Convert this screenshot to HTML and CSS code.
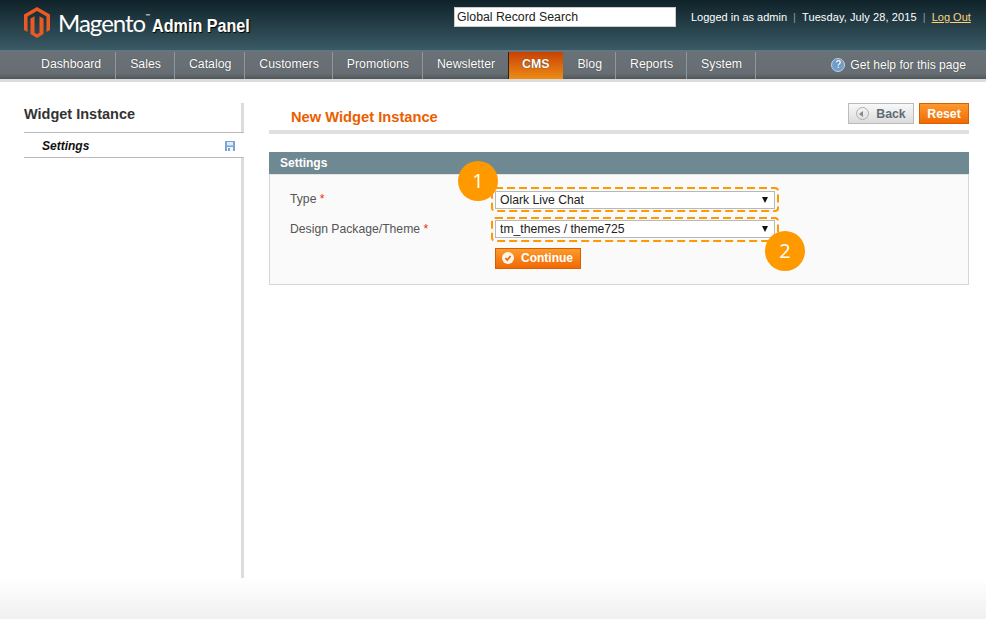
FILE: index.html
```html
<!DOCTYPE html>
<html lang="en">
<head>
    <meta charset="UTF-8">
    <title>New Widget Instance / Magento Admin</title>
    <link rel="stylesheet" href="styles.css">
</head>
<body>
    <header class="header">
        <div class="logo">
            <svg class="logo-mark" viewBox="0 0 26 31" width="26" height="31">
                <path fill="#ec5a23" d="M13 0L26 7.5V23L22.5 25V9.5L13 4L3.5 9.5V25L0 23V7.5Z"/>
                <path fill="#ec5a23" d="M6.5 11.5L10.5 9.2V25.7L13 27.2L15.5 25.7V9.2L19.5 11.5V27L13 31L6.5 27Z"/>
            </svg>
            <span class="logo-word">Magento<sup>™</sup></span>
            <span class="logo-panel">Admin Panel</span>
        </div>
        <input class="search" type="text" value="Global Record Search">
        <div class="user-info">
            <span>Logged in as admin</span>
            <i>|</i>
            <span class="date">Tuesday, July 28, 2015</span>
            <i>|</i>
            <a href="#">Log Out</a>
        </div>
    </header>

    <nav class="nav">
        <ul class="nav-list">
            <li>Dashboard</li>
            <li>Sales</li>
            <li>Catalog</li>
            <li>Customers</li>
            <li>Promotions</li>
            <li>Newsletter</li>
            <li class="active">CMS</li>
            <li>Blog</li>
            <li>Reports</li>
            <li>System</li>
        </ul>
        <a class="help" href="#"><span class="help-icon">?</span>Get help for this page</a>
    </nav>

    <div class="content">
        <aside class="sidebar">
            <h3>Widget Instance</h3>
            <div class="tab">
                <em>Settings</em>
                <svg viewBox="0 0 10 10" width="10" height="10">
                    <rect width="10" height="10" fill="#7ba4d6"/>
                    <rect x="2" y="1" width="6" height="3.5" fill="#dfeaf6"/>
                    <rect x="2" y="6" width="6" height="4" fill="#f4f6f8"/>
                    <rect x="3" y="7" width="2" height="3" fill="#7ba4d6"/>
                </svg>
            </div>
        </aside>

        <main class="main">
            <div class="page-head">
                <h3>New Widget Instance</h3>
                <button class="btn-back"><span class="back-icon"></span>Back</button>
                <button class="btn-reset">Reset</button>
            </div>

            <section class="panel">
                <h4>Settings</h4>
                <div class="panel-body">
                    <div class="row">
                        <label>Type <b>*</b></label>
                        <div class="dashed">
                            <svg class="dash-line" width="288" height="25"><rect x="1" y="1" width="286" height="23" rx="3"/></svg>
                            <div class="select-wrap">
                                <select><option>Olark Live Chat</option></select>
                            </div>
                        </div>
                    </div>
                    <div class="row">
                        <label>Design Package/Theme <b>*</b></label>
                        <div class="dashed second">
                            <svg class="dash-line" width="288" height="25"><rect x="1" y="1" width="286" height="23" rx="3"/></svg>
                            <div class="select-wrap">
                                <select><option>tm_themes / theme725</option></select>
                            </div>
                        </div>
                    </div>
                    <button class="btn-continue"><span class="check">
                        <svg viewBox="0 0 12 12" width="12" height="12"><circle cx="6" cy="6" r="6" fill="#fdf3e6"/><path d="M3.4 6.2L5.3 8L8.6 4" fill="none" stroke="#e8650f" stroke-width="1.7"/></svg>
                    </span>Continue</button>
                    <span class="badge badge-one">1</span>
                    <span class="badge badge-two">2</span>
                </div>
            </section>
        </main>
    </div>

    <footer class="footer"></footer>
</body>
</html>
```

FILE: styles.css
```css
* {
    box-sizing: border-box;
}

html, body {
    height: 619px;
    overflow: hidden;
}

body {
    font-family: "Liberation Sans", Arial, sans-serif;
    font-size: 12.3px;
    background-color: #fff;
    color: #444;
    margin: 0;
}

.header {
    height: 50px;
    background: linear-gradient(to bottom, #0f2229, #3a5a65);
    display: flex;
    padding-left: 24px;
}

.logo {
    display: flex;
    align-items: flex-start;
    width: 430px;
    padding-top: 7px;
    color: #fff;
}

.logo-mark {
    flex: none;
}

.logo-word {
    font-family: Lato, sans-serif;
    font-size: 24px;
    letter-spacing: -1px;
    line-height: 32px;
    margin-left: 8px;
    width: 94px;
    flex: none;
    white-space: nowrap;
}

.logo-word sup {
    font-size: 6px;
    line-height: 0;
    letter-spacing: 0;
    vertical-align: 14px;
}

.logo-panel {
    font-weight: bold;
    font-size: 19px;
    line-height: 20px;
    margin-top: 9px;
    white-space: nowrap;
    transform: scaleX(0.85);
    transform-origin: left center;
    text-shadow: 1px 1px 1px #000;
}

.search {
    width: 222px;
    height: 20px;
    margin-top: 7px;
    padding: 0 2px;
    border: 1px solid #ccc;
    background: #fff;
    font: 12.3px "Liberation Sans", Arial, sans-serif;
    color: #222;
}

.user-info {
    margin-left: 15px;
    padding-top: 11px;
    font-size: 11px;
    line-height: 13px;
    color: #fff;
    white-space: nowrap;
}

.user-info i {
    font-style: normal;
    color: #8a9a9f;
    margin: 0 3px;
}

.user-info .date {
    letter-spacing: 0.1px;
}

.user-info a {
    color: #ffd27a;
}

.nav {
    height: 32px;
    border-top: 2px solid #62777e;
    border-bottom: 3px solid #dcdcdc;
    background: linear-gradient(to bottom, #6a7277 0, #666e73 80%, #4f565a 100%);
    display: flex;
    justify-content: space-between;
}

.nav-list {
    list-style: none;
    margin: 0;
    padding: 0 0 0 27px;
    display: flex;
}

.nav-list li {
    padding: 0 13px 0 14px;
    border-right: 1px solid #8f979b;
    line-height: 25px;
    color: #fff;
    text-shadow: 0 0 1px #333;
}

.nav-list li:first-child {
    padding-right: 14px;
}

.nav-list li.active {
    padding: 0 14px 0 13px;
    border-right: 0;
    border-left: 1px solid #222;
    margin-left: -1px;
    background: linear-gradient(to bottom, #c84204, #ec8c16);
    font-weight: bold;
}

.help {
    color: #fff;
    font-size: 12.1px;
    text-decoration: none;
    padding: 0 20px 2px 0;
    display: flex;
    align-items: center;
    text-shadow: 0 0 1px #333;
}

.help-icon {
    width: 14px;
    height: 14px;
    margin-right: 5px;
    border-radius: 50%;
    background: #6f9fd0;
    border: 1px solid #bcd3ea;
    font-size: 10px;
    font-weight: bold;
    line-height: 12px;
    text-align: center;
}

.content {
    height: 496px;
    display: flex;
    align-items: flex-start;
    padding: 21px 17px 0 24px;
}

.sidebar {
    width: 220px;
    height: 475px;
    border-right: 3px solid #dcdcdc;
}

.sidebar h3 {
    margin: 0 -3px 0 0;
    height: 30px;
    border-bottom: 1px solid #bbb;
    font-size: 14.5px;
    line-height: 22px;
    color: #333;
}

.tab {
    height: 25px;
    border-bottom: 1px solid #bbb;
    display: flex;
    align-items: center;
    justify-content: space-between;
    padding: 1px 9px 0 18px;
    margin-right: -3px;
    background: #fff;
    color: #111;
}

.tab em {
    font-weight: bold;
    font-size: 12px;
}

.main {
    width: 700px;
    margin-left: 25px;
}

.page-head {
    height: 31px;
    border-bottom: 4px solid #e0e0e0;
    display: flex;
    align-items: flex-start;
}

.page-head h3 {
    margin: 6px auto 0 22px;
    font-size: 14.7px;
    line-height: 16px;
    color: #eb5e00;
}

button {
    font-family: "Liberation Sans", Arial, sans-serif;
    font-weight: bold;
    font-size: 12.3px;
    cursor: pointer;
    padding: 0;
}

.btn-back {
    width: 66px;
    height: 21px;
    margin-right: 5px;
    border: 1px solid #bbb;
    background: linear-gradient(to bottom, #f8f8f8, #dcdcdc);
    color: #5b6b78;
    display: flex;
    align-items: center;
    justify-content: center;
}

.back-icon {
    width: 13px;
    height: 13px;
    margin-right: 7px;
    border-radius: 50%;
    border: 1px solid #b0b0b0;
    position: relative;
}

.back-icon::after {
    content: "";
    position: absolute;
    left: 2px;
    top: 2.5px;
    border: 3px solid transparent;
    border-right: 4px solid #888;
    border-left: 0;
}

.btn-reset {
    width: 50px;
    height: 21px;
    border: 1px solid #d85f00;
    background: linear-gradient(to bottom, #fb9a2e, #f06a05);
    color: #fff;
}

.panel {
    margin-top: 18px;
}

.panel h4 {
    margin: 0;
    height: 22px;
    padding-left: 11px;
    background-color: #6f8992;
    color: #fff;
    font-size: 12px;
    line-height: 22px;
}

.panel-body {
    position: relative;
    height: 111px;
    padding: 12px 0 0 20px;
    border: 1px solid #d6d6d6;
    border-top-color: #e4e4e4;
    background-color: #fafafa;
}

.row {
    display: flex;
    height: 30px;
}

.row label {
    width: 201px;
    line-height: 25px;
    font-size: 12.2px;
    color: #555;
}

.row label b {
    color: #eb340a;
    font-weight: normal;
}

.dashed {
    position: relative;
    width: 288px;
    height: 25px;
    padding: 4px 4px 0;
}

.dashed.second {
    padding-top: 3px;
}

.dash-line {
    position: absolute;
    left: 0;
    top: 0;
}

.dash-line rect {
    fill: none;
    stroke: #f90;
    stroke-width: 2;
    stroke-dasharray: 8 4;
}

.select-wrap {
    position: relative;
    width: 280px;
    height: 18px;
}

.select-wrap::after {
    content: "";
    position: absolute;
    right: 7px;
    top: 6px;
    border: 3.5px solid transparent;
    border-top: 6px solid #111;
    border-bottom: 0;
}

select {
    appearance: none;
    display: block;
    width: 100%;
    height: 18px;
    padding: 0 4px;
    border: 1px solid #b8b8b8;
    border-radius: 0;
    background: #fff;
    color: #222;
    font: 12.2px "Liberation Sans", Arial, sans-serif;
}

.btn-continue {
    display: flex;
    align-items: center;
    width: 86px;
    height: 21px;
    margin: 1px 0 0 205px;
    padding: 0 0 1px 6px;
    border: 1px solid #d85f00;
    background: linear-gradient(to bottom, #fb9a2e, #f06a05);
    color: #fff;
    font-size: 12px;
}

.check {
    display: flex;
    margin-right: 7px;
}

.badge {
    position: absolute;
    width: 40px;
    height: 40px;
    border-radius: 50%;
    background-color: #f90;
    color: #fff;
    font-family: "Open Sans", sans-serif;
    font-size: 20px;
    line-height: 40px;
    text-align: center;
}

.badge-one {
    left: 188px;
    top: -14px;
}

.badge-two {
    left: 495px;
    top: 56px;
}

.footer {
    height: 41px;
    background: linear-gradient(to bottom, #fff, #f0f0f0);
}
```
